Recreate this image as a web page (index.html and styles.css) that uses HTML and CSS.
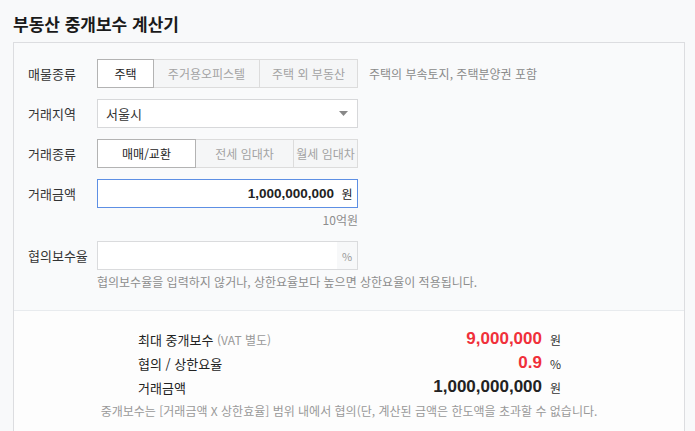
FILE: index.html
```html
<!DOCTYPE html>
<html lang="ko">
<head>
<meta charset="utf-8">
<link rel="stylesheet" href="styles.css">
</head>
<body>
<h1 class="title">부동산 중개보수 계산기</h1>
<div class="panel">
  <div class="form">
    <div class="row">
      <div class="label">매물종류</div>
      <div class="seg seg-type">
        <span class="opt on w1">주택</span>
        <span class="opt w2">주거용오피스텔</span>
        <span class="opt w3">주택 외 부동산</span>
      </div>
      <div class="note">주택의 부속토지, 주택분양권 포함</div>
    </div>
    <div class="row">
      <div class="label">거래지역</div>
      <div class="select">
        <span>서울시</span>
        <svg class="caret" width="9" height="5" viewBox="0 0 9 5"><path d="M0 0h9L4.5 5z" fill="#888"/></svg>
      </div>
    </div>
    <div class="row">
      <div class="label">거래종류</div>
      <div class="seg">
        <span class="opt on d1">매매/교환</span>
        <span class="opt d2">전세 임대차</span>
        <span class="opt d3">월세 임대차</span>
      </div>
    </div>
    <div class="row">
      <div class="label">거래금액</div>
      <div class="field focus">
        <span class="val">1,000,000,000</span>
        <span class="unit">원</span>
      </div>
    </div>
    <div class="sub sub-right">10억원</div>
    <div class="row row-rate">
      <div class="label">협의보수율</div>
      <div class="field">
        <span class="val"></span>
        <span class="unit pct">%</span>
      </div>
    </div>
    <div class="sub hint">협의보수율을 입력하지 않거나, 상한요율보다 높으면 상한요율이 적용됩니다.</div>
  </div>
  <div class="result">
    <div class="grid">
      <div class="rl">최대 중개보수 <span class="vat">(VAT 별도)</span></div>
      <div class="rv red">9,000,000</div>
      <div class="ru">원</div>
      <div class="rl">협의 / 상한요율</div>
      <div class="rv red">0.9</div>
      <div class="ru">%</div>
      <div class="rl">거래금액</div>
      <div class="rv">1,000,000,000</div>
      <div class="ru">원</div>
    </div>
    <p class="foot">중개보수는 [거래금액 X 상한효율] 범위 내에서 협의(단, 계산된 금액은 한도액을 초과할 수 없습니다.</p>
  </div>
</div>
</body>
</html>
```

FILE: styles.css
```css
html, body {
  margin: 0;
  padding: 0;
  background: #f8f9fa;
  font-family: "Noto Sans CJK KR", "Noto Sans", sans-serif;
  color: #333;
  font-size: 12px;
  overflow: hidden;
}
.title {
  margin: 0;
  padding: 12px 13px 0;
  height: 30px;
  font-size: 17px;
  font-weight: bold;
  color: #1a1a1a;
  line-height: 24px;
}
.panel {
  margin: 0 10px 0 13px;
  border: 1px solid #dcdde0;
  border-bottom: none;
  background: #f9fafb;
  height: 389px;
}
.form {
  padding: 16px 0 0 14px;
  height: 251px;
  border-bottom: 1px solid #e8ebee;
}
.row {
  display: flex;
  align-items: center;
  height: 29px;
  margin-bottom: 11px;
}
.label {
  width: 69px;
  font-size: 13px;
  color: #333;
}
.seg {
  display: flex;
  height: 29px;
  box-sizing: border-box;
  border: 1px solid #dcdcdc;
  background: #f5f6f7;
}
.opt {
  display: flex;
  align-items: center;
  justify-content: center;
  color: #a3a3a3;
  font-size: 12px;
  border-left: 1px solid #dcdcdc;
  box-sizing: border-box;
  height: 27px;
}
.opt:first-child { border-left: none; }
.opt.on {
  background: #fff;
  color: #222;
  outline: 1px solid #b3b3b3;
  position: relative;
}
.w1 { width: 55px; }
.w2 { width: 106px; }
.w3 { width: 98px; }
.d1 { width: 97px; }
.d2 { width: 98px; }
.d3 { width: 64px; }
.note {
  margin-left: 11px;
  color: #8a8a8a;
  font-size: 12px;
}
.select {
  width: 261px;
  height: 29px;
  box-sizing: border-box;
  border: 1px solid #d7d8da;
  background: #fff;
  display: flex;
  align-items: center;
  justify-content: space-between;
  padding: 0 9px 0 8px;
  color: #333;
  font-size: 13px;
}
.field {
  width: 261px;
  height: 29px;
  box-sizing: border-box;
  border: 1px solid #dadbdd;
  background: #fff;
  display: flex;
  align-items: center;
}
.field.focus { border-color: #5d8fe4; }
.val {
  flex: 1;
  text-align: right;
  font-family: "Liberation Sans", Arial, sans-serif;
  font-weight: bold;
  font-size: 13.5px;
  color: #222;
  padding-right: 3px;
}
.unit {
  width: 20px;
  height: 27px;
  display: flex;
  align-items: center;
  justify-content: center;
  color: #222;
  font-size: 12px;
}
.unit.pct {
  background: #f7f8f9;
  color: #999;
  font-size: 11px;
}
.sub {
  font-size: 12px;
  color: #8d8d8d;
}
.sub-right {
  width: 330px;
  text-align: right;
  margin-top: -6px;
  height: 28px;
  line-height: 14px;
}
.row-rate { margin-bottom: 4px; }
.hint { padding-left: 69px; line-height: 16px; }
.result {
  background: #fdfdfd;
  height: 137px;
  padding-top: 16px;
  box-sizing: border-box;
}
.grid {
  display: grid;
  grid-template-columns: 202px 202px auto;
  grid-auto-rows: 24px;
  align-items: center;
  margin-left: 124px;
}
.rl { font-size: 13px; color: #222; }
.vat { color: #999; font-size: 12px; }
.rv {
  text-align: right;
  font-family: "Liberation Sans", Arial, sans-serif;
  font-weight: bold;
  font-size: 17px;
  color: #222;
}
.rv.red { color: #f0303a; }
.ru { padding-left: 8px; font-size: 12px; color: #333; }
.foot {
  margin: 3px 0 0;
  text-align: center;
  font-size: 12px;
  color: #999;
}
```
